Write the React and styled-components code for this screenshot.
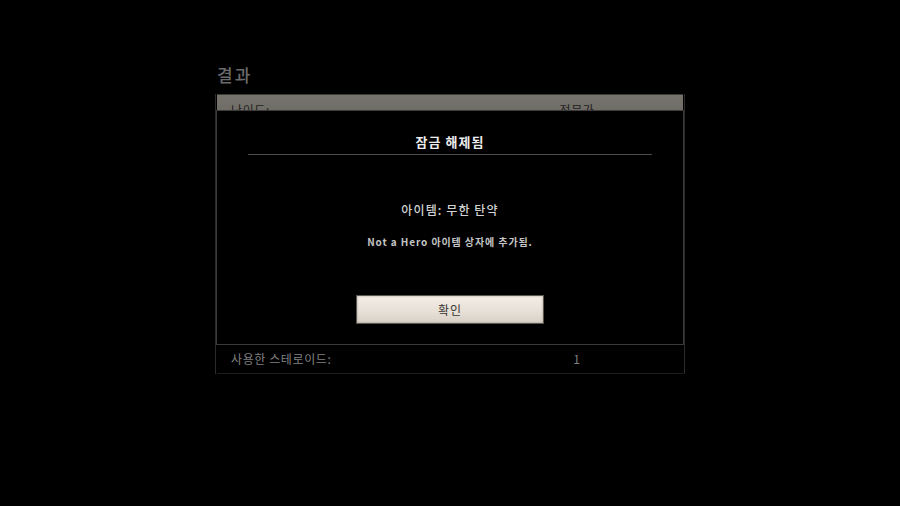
import React from "react";
import styled, { createGlobalStyle } from "styled-components";

const GlobalStyle = createGlobalStyle`
  html, body {
    margin: 0;
    padding: 0;
    background: #000;
  }
  body {
    font-family: "Noto Sans CJK KR", "Noto Sans", sans-serif;
  }
`;

const rows = [
  { label: "난이도:", value: "전문가", highlight: true },
  { label: "클리어 시간:", value: "00:12:48" },
  { label: "처치한 적:", value: "57" },
  { label: "헤드샷:", value: "21" },
  { label: "명중률:", value: "64%" },
  { label: "사망 횟수:", value: "0" },
  { label: "수집한 아이템:", value: "3" },
  { label: "획득한 점수:", value: "12400" },
  { label: "사용한 스테로이드:", value: "1" },
];

export default function App() {
  return (
    <>
      <GlobalStyle />
      <Screen>
        <Results>
          <Heading>결과</Heading>
          <Table>
            {rows.map((row) => (
              <Row key={row.label} highlight={row.highlight}>
                <Label>{row.label}</Label>
                <Value>{row.value}</Value>
              </Row>
            ))}
            <Dialog>
              <DialogTitle>잠금 해제됨</DialogTitle>
              <Divider />
              <ItemName>아이템: 무한 탄약</ItemName>
              <Notice>Not a Hero 아이템 상자에 추가됨.</Notice>
              <ConfirmButton>확인</ConfirmButton>
            </Dialog>
          </Table>
        </Results>
      </Screen>
    </>
  );
}

const Screen = styled.div`
  width: 900px;
  height: 506px;
  background: #000;
  display: flex;
  justify-content: center;
  padding-top: 62px;
  box-sizing: border-box;
`;

const Results = styled.section`
  width: 470px;
  display: flex;
  flex-direction: column;
`;

const Heading = styled.h2`
  margin: 0 0 8px 2px;
  height: 24px;
  font-size: 17px;
  font-weight: 500;
  color: #6b6b6b;
  letter-spacing: 2px;
`;

const Table = styled.div`
  position: relative;
  border-left: 1px solid #2c2c2c;
  border-right: 1px solid #2c2c2c;
  padding: 0 1px;
`;

const Row = styled.div`
  display: flex;
  align-items: center;
  height: ${(p) => (p.highlight ? "30px" : "31.3px")};
  box-sizing: border-box;
  background: ${(p) =>
    p.highlight ? "linear-gradient(#76736d, #6a6862)" : "transparent"};
  border-top: 1px solid ${(p) => (p.highlight ? "#3e3c38" : "#3a3a3a")};
  border-bottom: 1px solid ${(p) => (p.highlight ? "#55534e" : "#1e1e1e")};
  font-size: 12px;
  color: ${(p) => (p.highlight ? "#1e1e1e" : "#808080")};
  letter-spacing: 0.6px;

  &:last-of-type {
    height: 30px;
  }
`;

const Label = styled.span`
  flex: 1;
  padding-left: 14px;
`;

const Value = styled.span`
  width: 212px;
  text-align: center;
`;

const Dialog = styled.div`
  position: absolute;
  left: 0;
  right: 0;
  top: 16px;
  height: 235px;
  box-sizing: border-box;
  background: #000;
  border: 1px solid #3a3a3a;
  display: flex;
  flex-direction: column;
  align-items: center;
`;

const DialogTitle = styled.h3`
  margin: 22px 0 0;
  font-size: 13px;
  font-weight: 700;
  color: #ececec;
  letter-spacing: 1px;
  line-height: 18px;
`;

const Divider = styled.hr`
  width: 404px;
  margin: 3px 0 0;
  border: none;
  border-top: 1px solid #4c4c4c;
`;

const ItemName = styled.p`
  margin: 46px 0 0;
  font-size: 12px;
  font-weight: 500;
  color: #d2d2d2;
  letter-spacing: 1.1px;
  line-height: 18px;
`;

const Notice = styled.p`
  margin: 15px 0 0;
  font-size: 10px;
  font-weight: 700;
  color: #c4c4c4;
  letter-spacing: 0.9px;
  line-height: 16px;
`;

const ConfirmButton = styled.button`
  margin-top: 45px;
  width: 188px;
  height: 29px;
  border: 1px solid #5a5650;
  background: linear-gradient(#f2ede6, #e6dfd6 60%, #d9d1c7);
  box-shadow: inset 0 0 2px rgba(80, 70, 60, 0.5);
  font-family: "Noto Sans CJK KR", sans-serif;
  font-size: 12px;
  color: #3a3632;
  letter-spacing: 1px;
  cursor: pointer;
`;
